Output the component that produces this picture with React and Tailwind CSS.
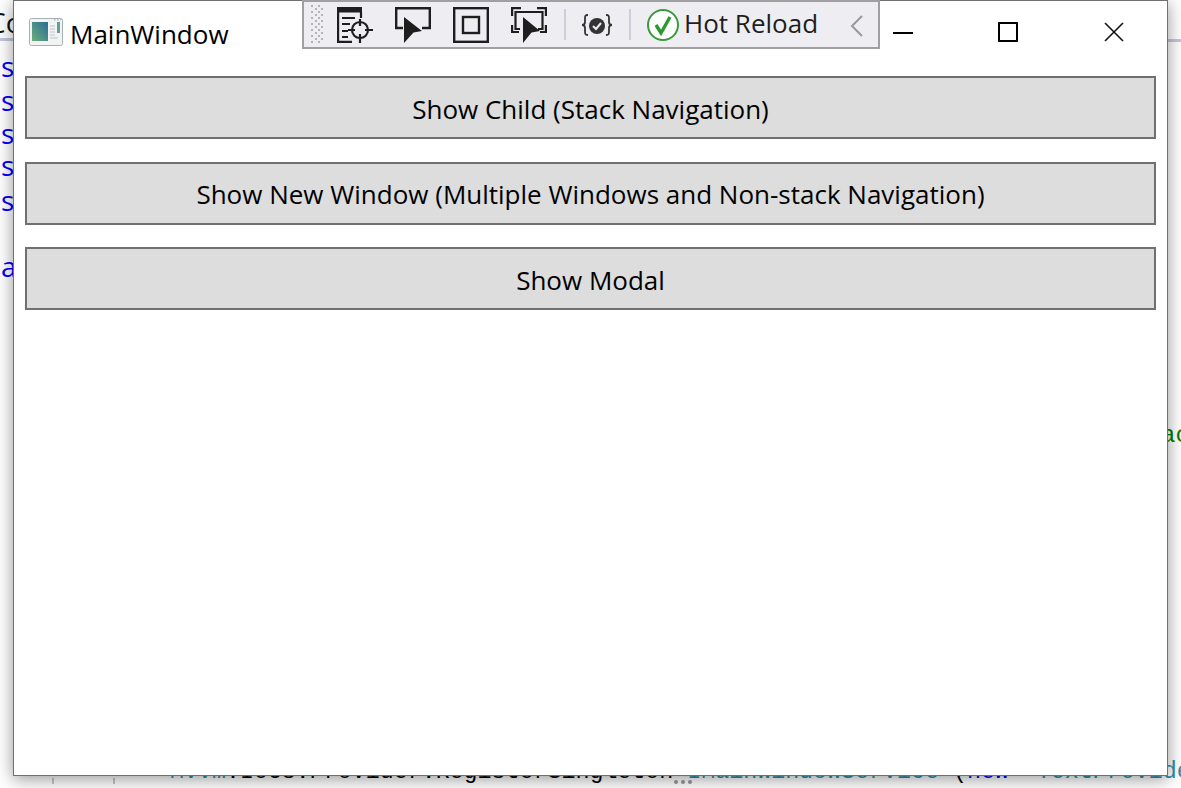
import React from 'react'

const font = { fontFamily: '"Open Sans", "Noto Sans", sans-serif' }
const mono = { fontFamily: '"Liberation Mono", monospace' }

function AppIcon() {
  return (
    <svg width="34" height="28" viewBox="0 0 34 28">
      <defs>
        <linearGradient id="pane" x1="0" y1="1" x2="1" y2="0">
          <stop offset="0" stopColor="#6aae7c" />
          <stop offset="1" stopColor="#2b6c96" />
        </linearGradient>
      </defs>
      <rect x="0.5" y="0.5" width="33" height="27" rx="2" fill="#f2f4f4" stroke="#a9b0b4" />
      <rect x="3" y="4" width="16" height="19" fill="url(#pane)" />
      <rect x="28" y="4" width="3" height="11" fill="#5f9f95" />
      <path d="M21 8h5M21 11h5M21 14h5M21 17h5M21 20h8" stroke="#d0d4d6" strokeWidth="1.4" />
      <path d="M25 1.8h1.5M28 1.8h1.5M31 1.8h1" stroke="#9aa0a4" />
    </svg>
  )
}

function Gripper() {
  return (
    <svg width="14" height="40" viewBox="0 0 14 40" fill="#b4b4b8">
      {[0, 1, 2, 3, 4, 5, 6, 7, 8, 9, 10, 11, 12].map((i) => (
        <React.Fragment key={i}>
          <rect x={i % 2 ? 5 : 1} y={i * 3} width="2" height="2" />
          <rect x={i % 2 ? 11 : 8} y={i * 3} width="2" height="2" />
        </React.Fragment>
      ))}
    </svg>
  )
}

function TreeTargetIcon() {
  return (
    <svg width="36" height="36" viewBox="0 0 36 36" fill="none" stroke="#1e1e1e" strokeWidth="2.2">
      <rect x="0" y="0" width="25" height="5.5" fill="#1e1e1e" stroke="none" />
      <path d="M1.1 5v29.9H15M24 5v6" />
      <path d="M5 11h13M5 17h8M5 24h6M5 30h6" />
      <circle cx="23" cy="23" r="8" />
      <path d="M23 12v7M23 27v9M11 23h7M28 23h8" />
    </svg>
  )
}

function CursorIcon() {
  return (
    <svg width="36" height="36" viewBox="0 0 36 36" fill="none">
      <path d="M8 21H1.2V1.2h33.6V21H27" stroke="#1e1e1e" strokeWidth="2.4" />
      <path d="M9 10l18 14-8.5 1.5L9 36z" fill="#1e1e1e" />
    </svg>
  )
}

function BoundsIcon() {
  return (
    <svg width="36" height="36" viewBox="0 0 36 36" fill="none" stroke="#1e1e1e" strokeWidth="2.4">
      <rect x="1.2" y="1.2" width="33.6" height="33.6" />
      <rect x="10" y="10" width="16" height="16" />
    </svg>
  )
}

function SelectCursorIcon() {
  return (
    <svg width="36" height="36" viewBox="0 0 36 36" fill="none">
      <path d="M1.1 9V1.1H10M26 1.1h8.9V9M1.1 18v7H8M34.9 18v7H29" stroke="#1e1e1e" strokeWidth="2.2" />
      <path d="M9 22H4.5V5h27v17H27" stroke="#1e1e1e" strokeWidth="2.2" />
      <path d="M12 10l17 14-8.5 1.5L12 36z" fill="#1e1e1e" />
    </svg>
  )
}

function BindingIcon() {
  return (
    <svg width="32" height="24" viewBox="0 0 32 24" fill="none">
      <path d="M7 2c-3 0-3 1-3 4v3c0 2-1 3-3 3 2 0 3 1 3 3v3c0 3 0 4 3 4M25 2c3 0 3 1 3 4v3c0 2 1 3 3 3-2 0-3 1-3 3v3c0 3 0 4-3 4" stroke="#333" strokeWidth="1.8" />
      <circle cx="16" cy="13" r="8" fill="#333" />
      <path d="M12 13l3 3 5-6" stroke="#eeeef2" strokeWidth="2" />
    </svg>
  )
}

function HotReloadIcon() {
  return (
    <svg width="34" height="34" viewBox="0 0 34 34" fill="none">
      <circle cx="17" cy="17" r="15" fill="#fff" stroke="#3a9a3a" strokeWidth="2" />
      <path d="M10 17l5 8 9-16" stroke="#2b9a2b" strokeWidth="3.4" />
    </svg>
  )
}

function WindowButtons() {
  return (
    <div className="flex items-center">
      <svg width="20" height="2" viewBox="0 0 20 2" className="mt-[2px]">
        <rect width="20" height="2" fill="#000" />
      </svg>
      <svg width="20" height="20" viewBox="0 0 20 20" fill="none" stroke="#000" strokeWidth="2" className="ml-[85px]">
        <rect x="1" y="1" width="18" height="18" />
      </svg>
      <svg width="20" height="20" viewBox="0 0 20 20" fill="none" stroke="#111" strokeWidth="1.6" className="ml-[86px]">
        <path d="M1 1l18 18M19 1L1 19" />
      </svg>
    </div>
  )
}

function WpfButton({ label, className }) {
  return (
    <button className={`h-[63px] w-full border-2 border-[#707070] bg-[#dddddd] text-[26px] text-black ${className}`}>
      {label}
    </button>
  )
}

export default function App() {
  return (
    <div className="relative h-[788px] w-[1181px] overflow-hidden bg-white" style={font}>
      {/* code editor behind the window */}
      <div className="absolute left-[-12px] top-[1px] text-[28px] text-[#111]">Co</div>
      <div className="absolute left-0 top-[38px] h-[3px] w-[14px] bg-[#c6c6de]" />
      <div className="absolute right-0 top-[39px] h-[3px] w-[14px] bg-[#c6c6de]" />
      <div className="absolute left-[1px] top-0 text-[28px] leading-[28px] text-[#0000ff]">
        <div className="absolute top-[52px]">s</div>
        <div className="absolute top-[86px]">s</div>
        <div className="absolute top-[119px]">s</div>
        <div className="absolute top-[151px]">s</div>
        <div className="absolute top-[186px]">s</div>
        <div className="absolute top-[252px]">a</div>
      </div>
      <div className="absolute left-[1161px] top-[418px] whitespace-nowrap text-[24px] text-[#008000]" style={mono}>
        ac
      </div>
      <div className="absolute left-[170px] top-[755px] whitespace-pre text-[23.3px] text-black" style={mono}>
        <span className="text-[#2b91af]">Mvvm</span>.IoCs.Provider.RegisterSingleton&lt;<span className="text-[#2b91af]">IMainWindowService</span>&gt;(<span className="text-[#0000ff]">new</span>  <span className="text-[#2b91af]">TextProvider</span>
      </div>
      <div className="absolute left-[52px] top-[778px] h-[6px] w-[2px] bg-[#c8c8c8]" />
      <div className="absolute left-[113px] top-[778px] h-[6px] w-[2px] bg-[#c8c8c8]" />
      <div className="absolute left-[674px] top-[780px] flex gap-[3px]">
        <span className="h-1 w-1 rounded-full bg-[#999]" />
        <span className="h-1 w-1 rounded-full bg-[#999]" />
        <span className="h-1 w-1 rounded-full bg-[#999]" />
      </div>

      {/* app window */}
      <div className="absolute left-[13px] top-0 flex h-[776px] w-[1155px] flex-col border border-[#707070] bg-white shadow-[0_3px_16px_rgba(0,0,0,0.42)]">
        <div className="flex h-[75px] shrink-0 items-start pl-[15px] pt-[17px]">
          <AppIcon />
          <span className="ml-[7px] mt-[-1px] text-[26px] leading-[34px] text-black">MainWindow</span>
          <div className="ml-auto mr-[43px] mt-[4px]">
            <WindowButtons />
          </div>
        </div>
        <div className="flex flex-col pl-[11px] pr-[11px]">
          <WpfButton label="Show Child (Stack Navigation)" className="pt-[4px]" />
          <WpfButton label="Show New Window (Multiple Windows and Non-stack Navigation)" className="mt-[23px] pt-[2px]" />
          <WpfButton label="Show Modal" className="mt-[22px] pt-[4px]" />
        </div>
      </div>

      {/* debug toolbar floating over the title bar */}
      <div className="absolute left-[302px] top-0 flex h-[49px] w-[578px] items-center border-2 border-[#a0a0a0] bg-[#eeeef2] pl-[6px]">
        <Gripper />
        <div className="ml-[13px]"><TreeTargetIcon /></div>
        <div className="ml-[22px]"><CursorIcon /></div>
        <div className="ml-[22px]"><BoundsIcon /></div>
        <div className="ml-[22px]"><SelectCursorIcon /></div>
        <div className="ml-[17px] h-[31px] w-[2px] bg-[#ccced9]" />
        <div className="ml-[15px]"><BindingIcon /></div>
        <div className="ml-[16px] h-[31px] w-[2px] bg-[#ccced9]" />
        <div className="ml-[15px]"><HotReloadIcon /></div>
        <span className="ml-[4px] mt-[-3px] text-[26px] leading-[34px] text-[#1e1e1e]">Hot Reload</span>
        <svg width="14" height="24" viewBox="0 0 14 24" fill="none" stroke="#999" strokeWidth="2" className="ml-[32px] mt-[2px]">
          <path d="M12 2L2 12l10 10" />
        </svg>
      </div>
    </div>
  )
}
